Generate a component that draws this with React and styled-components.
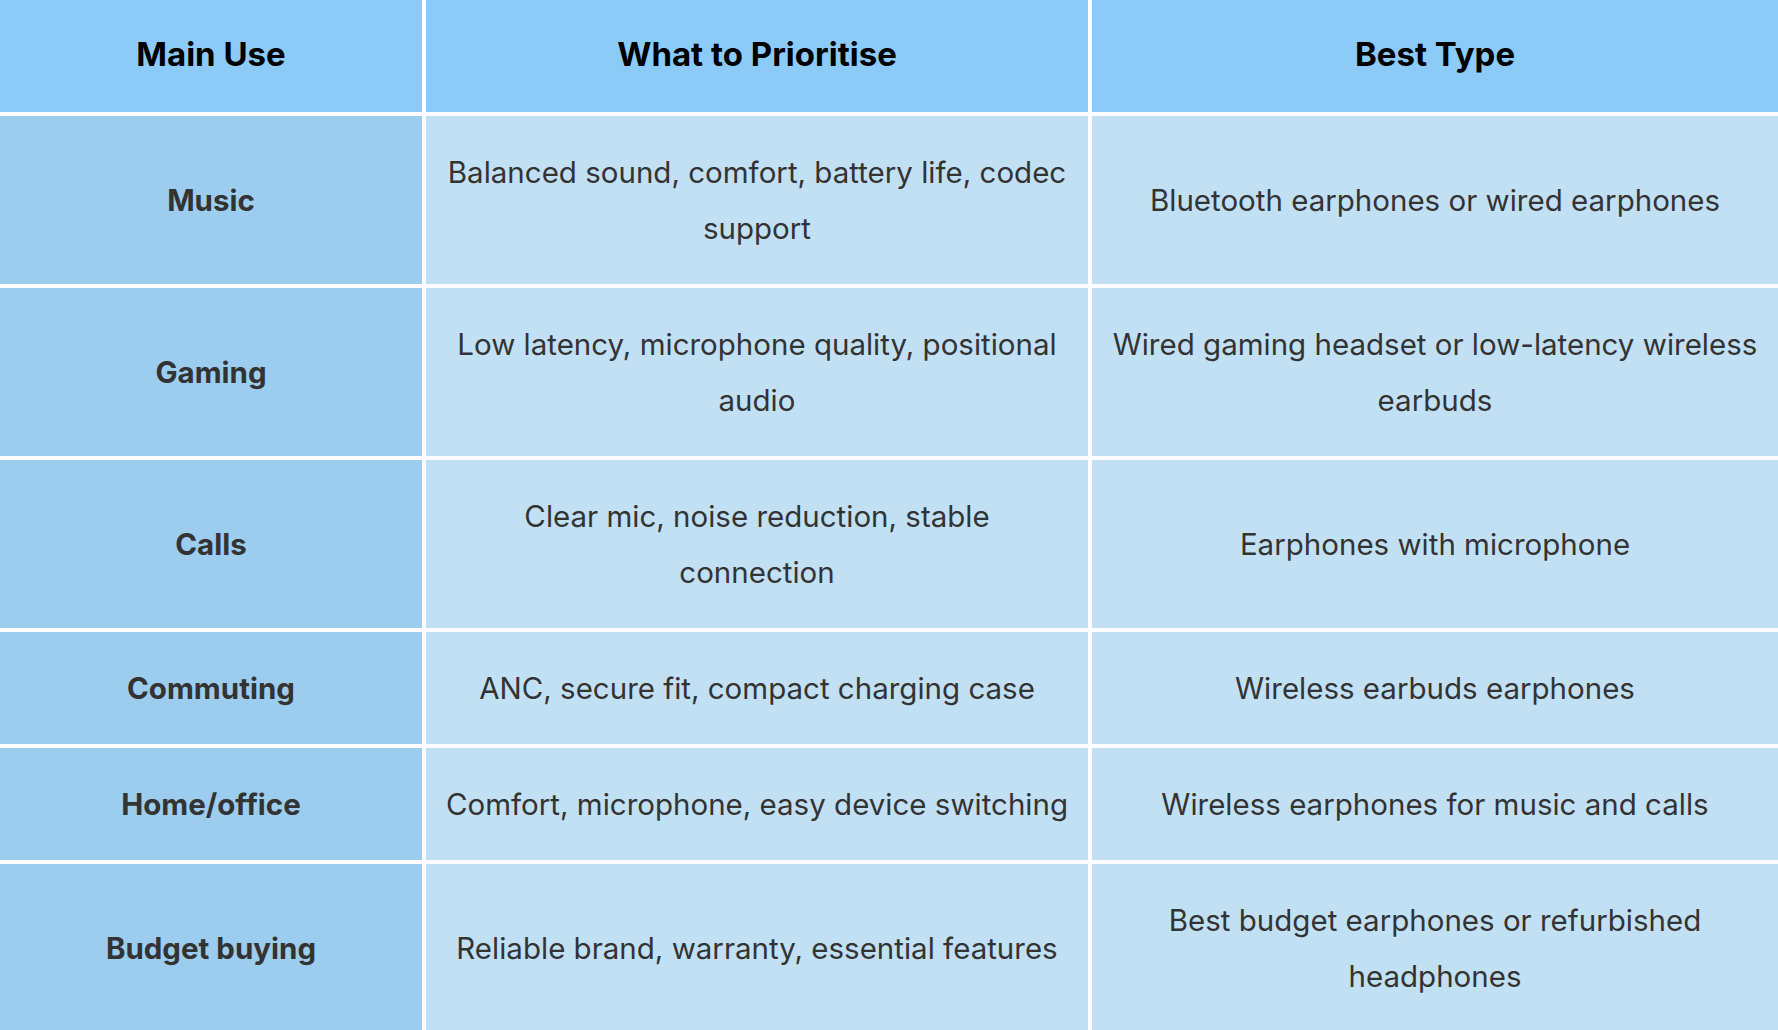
import styled, { createGlobalStyle } from 'styled-components'

// line breaks follow the original layout, so a different font can't rewrap the cells
const rows = [
  { use: 'Music', priority: 'Balanced sound, comfort, battery life, codec\nsupport', type: 'Bluetooth earphones or wired earphones', tall: true },
  { use: 'Gaming', priority: 'Low latency, microphone quality, positional\naudio', type: 'Wired gaming headset or low-latency wireless\nearbuds', tall: true },
  { use: 'Calls', priority: 'Clear mic, noise reduction, stable\nconnection', type: 'Earphones with microphone', tall: true },
  { use: 'Commuting', priority: 'ANC, secure fit, compact charging case', type: 'Wireless earbuds earphones' },
  { use: 'Home/office', priority: 'Comfort, microphone, easy device switching', type: 'Wireless earphones for music and calls' },
  { use: 'Budget buying', priority: 'Reliable brand, warranty, essential features', type: 'Best budget earphones or refurbished\nheadphones', tall: true },
]

export default function App() {
  return (
    <>
      <GlobalStyle />
      <Table>
        <HeadCell>Main Use</HeadCell>
        <HeadCell>What to Prioritise</HeadCell>
        <HeadCell>Best Type</HeadCell>
        {rows.map((row) => (
          <Row key={row.use} $tall={row.tall}>
            <UseCell>{row.use}</UseCell>
            <Cell>{row.priority}</Cell>
            <Cell>{row.type}</Cell>
          </Row>
        ))}
      </Table>
    </>
  )
}

const GlobalStyle = createGlobalStyle`
  html, body {
    margin: 0;
    padding: 0;
    background: #fff;
    overflow: hidden;
  }
`

const Table = styled.div`
  display: grid;
  grid-template-columns: 422px 662px 686px;
  gap: 4px;
  width: 1778px;
  background: #fff;
  font-family: Inter, "Open Sans", sans-serif;
`

const Row = styled.div`
  display: contents;

  & > div {
    height: ${({ $tall }) => ($tall ? '168px' : '112px')};
  }
`

const BaseCell = styled.div`
  display: flex;
  align-items: center;
  justify-content: center;
  box-sizing: border-box;
  padding: 0 10px;
  text-align: center;
  white-space: pre;
`

const HeadCell = styled(BaseCell)`
  height: 112px;
  padding-bottom: 4px;
  background: #8ccbf7;
  color: #000;
  font-size: 33px;
  font-weight: 700;
`

const UseCell = styled(BaseCell)`
  background: #9ccdef;
  color: #333;
  font-size: 29.5px;
  font-weight: 700;
`

const Cell = styled(BaseCell)`
  background: #c2e0f4;
  color: #333;
  font-size: 29.5px;
  font-weight: 400;
  line-height: 56px;
`
